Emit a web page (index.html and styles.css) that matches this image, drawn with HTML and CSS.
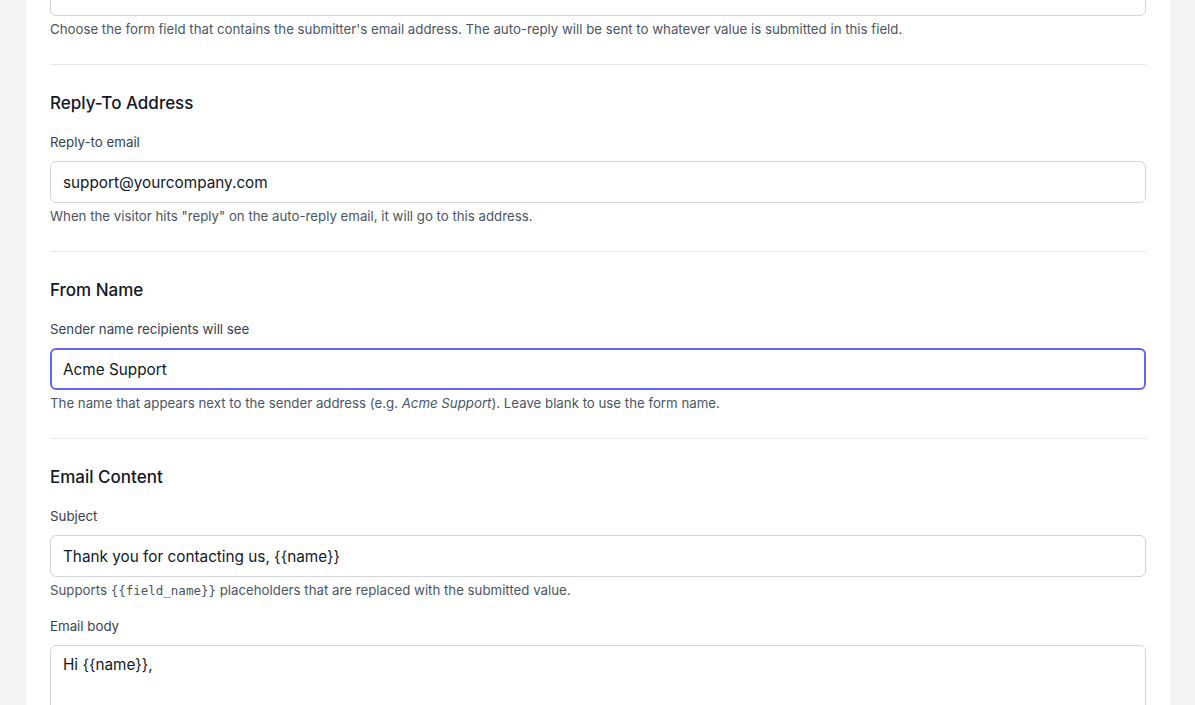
FILE: index.html
```html
<!DOCTYPE html>
<html lang="en">
<head>
<meta charset="utf-8">
<title>Auto-reply settings</title>
<link rel="stylesheet" href="styles.css">
</head>
<body>
<div class="page">
  <div class="card">
    <div class="field-tail">
      <div class="input input-top"></div>
      <p class="help">Choose the form field that contains the submitter's email address. The auto-reply will be sent to whatever value is submitted in this field.</p>
    </div>

    <section class="section">
      <h3 class="heading">Reply-To Address</h3>
      <div class="field">
        <label class="label">Reply-to email</label>
        <div class="input">support@yourcompany.com</div>
        <p class="help">When the visitor hits "reply" on the auto-reply email, it will go to this address.</p>
      </div>
    </section>

    <section class="section">
      <h3 class="heading">From Name</h3>
      <div class="field">
        <label class="label">Sender name recipients will see</label>
        <div class="input focused">Acme Support</div>
        <p class="help">The name that appears next to the sender address (e.g. <em>Acme Support</em>). Leave blank to use the form name.</p>
      </div>
    </section>

    <section class="section">
      <h3 class="heading">Email Content</h3>
      <div class="field">
        <label class="label">Subject</label>
        <div class="input">Thank you for contacting us, {{name}}</div>
        <p class="help">Supports <code class="code">{{field_name}}</code> placeholders that are replaced with the submitted value.</p>
      </div>
      <div class="field">
        <label class="label">Email body</label>
        <div class="input textarea">Hi {{name}},</div>
      </div>
    </section>
  </div>
</div>
</body>
</html>
```

FILE: styles.css
```css
* { box-sizing: border-box; }
html, body { margin: 0; padding: 0; }
body {
  background: #f3f4f6;
  font-family: Inter, "Liberation Sans", sans-serif;
  color: #111827;
  height: 705px;
  overflow: hidden;
}
.page {
  padding: 0 25px 0 26px;
}
.card {
  background: #fff;
  padding: 0 24px;
  min-height: 705px;
  margin-top: -26px;
}
.field-tail { padding-bottom: 25px; }
.input {
  height: 42px;
  border: 1px solid #d1d5db;
  border-radius: 6px;
  padding: 0 12px;
  display: flex;
  align-items: center;
  font-size: 15.3px;
  color: #111827;
  background: #fff;
}
.input.focused {
  border: 2px solid #6366f1;
  padding: 0 11px;
}
.input.textarea {
  height: 120px;
  align-items: flex-start;
  padding-top: 9px;
}
.help {
  margin: 3px 0 0;
  font-size: 13.25px;
  line-height: 20px;
  color: #4b5563;
}
.help em { font-style: italic; }
.code {
  font-family: "DejaVu Sans Mono", monospace;
  font-size: 12.5px;
  color: #4b5563;
}
.section {
  border-top: 1px solid #e5e7eb;
  padding: 24px 0 25px;
}
.heading {
  margin: 0 0 15px;
  font-size: 17px;
  line-height: 28px;
  font-weight: 500;
  color: #111827;
}
.field + .field { margin-top: 15px; }
.label {
  display: block;
  font-size: 13.3px;
  line-height: 20px;
  color: #374151;
  font-weight: 400;
  margin-bottom: 9px;
}
```
